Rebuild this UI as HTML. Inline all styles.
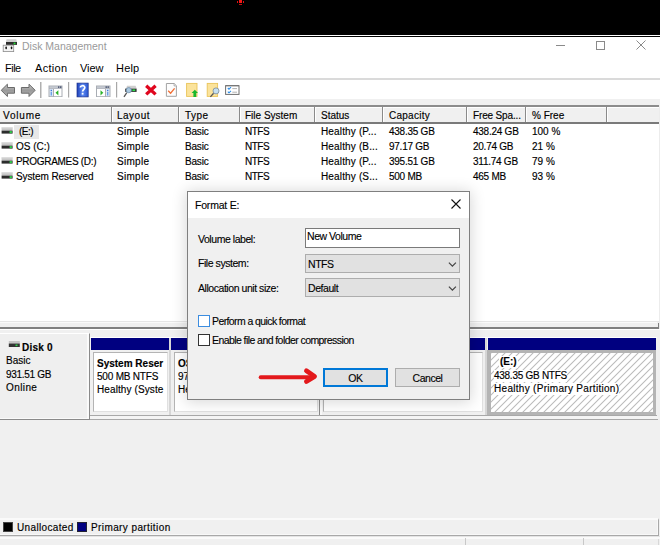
<!DOCTYPE html>
<html><head><meta charset="utf-8">
<style>
*{margin:0;padding:0;box-sizing:border-box}
html,body{width:660px;height:545px;overflow:hidden;background:#f0f0f0;font-family:"Liberation Sans",sans-serif;font-size:10px;color:#000}
.a{position:absolute;white-space:nowrap}
.f{font-size:10px;line-height:12px;-webkit-text-stroke:0.15px currentColor}
.d{font-size:10.5px;letter-spacing:-0.45px;line-height:12px;-webkit-text-stroke:0.12px currentColor}
svg{position:absolute;overflow:visible}
</style></head><body>
<!-- top black bar -->
<div class="a" style="left:0;top:0;width:660px;height:35px;background:#000"></div>
<div class="a" style="left:237px;top:1px;width:1px;height:2px;background:#e01010"></div>
<div class="a" style="left:239px;top:0;width:3px;height:3px;background:#f01818"></div>
<div class="a" style="left:243px;top:1px;width:1px;height:2px;background:#e01010"></div>
<div class="a" style="left:239px;top:4px;width:3px;height:1px;background:#c01010"></div>
<div class="a" style="left:0;top:35px;width:660px;height:1px;background:#fff"></div>
<div class="a" style="left:0;top:36px;width:660px;height:1px;background:#000"></div>

<!-- title bar -->
<div class="a" style="left:0;top:37px;width:660px;height:41px;background:#fff"></div>
<svg style="left:0;top:36px" width="20" height="18" viewBox="0 36 20 18">
  <path d="M6.5 39.2H16.3L16.9 42H6Z" fill="#cfcfcf"/>
  <rect x="6" y="42" width="11" height="2.9" fill="#2e2e2e"/>
  <rect x="13.6" y="42.6" width="1.9" height="1.7" fill="#22dd33"/>
  <rect x="3.2" y="45.2" width="10.5" height="6.4" fill="#f4f4f4" stroke="#8c8c8c" stroke-width="0.8"/>
  <rect x="5.4" y="46.6" width="1.5" height="2.6" rx="0.6" fill="#111"/>
  <rect x="10.8" y="46.6" width="1.5" height="2.6" rx="0.6" fill="#111"/>
</svg>
<div class="a" style="left:22px;top:40px;font-size:10.5px;color:#9a9a9a;line-height:12px">Disk Management</div>
<div class="a" style="left:556px;top:45px;width:9px;height:1px;background:#8a8a8a"></div>
<div class="a" style="left:596px;top:41px;width:9px;height:9px;border:1px solid #8a8a8a"></div>
<svg style="left:636px;top:40px" width="10" height="10" viewBox="0 0 10 10"><path d="M0.5 0.5L9.5 9.5M9.5 0.5L0.5 9.5" stroke="#8a8a8a" stroke-width="1"/></svg>

<!-- menu -->
<div class="a" style="left:5px;top:62.2px;font-size:11px;line-height:12px;letter-spacing:-0.5px">File</div>
<div class="a" style="left:35px;top:62.2px;font-size:11px;line-height:12px;letter-spacing:0.3px">Action</div>
<div class="a" style="left:80px;top:62.2px;font-size:11px;line-height:12px;letter-spacing:-0.1px">View</div>
<div class="a" style="left:116px;top:62.2px;font-size:11px;line-height:12px;letter-spacing:0.2px">Help</div>

<!-- toolbar -->
<div class="a" style="left:0;top:78px;width:660px;height:2px;background:#dadada"></div>
<div class="a" style="left:0;top:80px;width:660px;height:19px;background:#fff"></div>
<div class="a" style="left:0;top:99px;width:660px;height:6px;background:#f0f0f0"></div>


<svg style="left:0;top:80px" width="245" height="19" viewBox="0 80 245 19">
 <defs>
  <linearGradient id="ag" x1="0" y1="0" x2="0" y2="1"><stop offset="0" stop-color="#c8c8c8"/><stop offset="0.5" stop-color="#9a9a9a"/><stop offset="1" stop-color="#b0b0b0"/></linearGradient>
  <linearGradient id="hg" x1="0" y1="0" x2="1" y2="0"><stop offset="0" stop-color="#1c3fb8"/><stop offset="0.5" stop-color="#5d8af2"/><stop offset="1" stop-color="#2a55d0"/></linearGradient>
 </defs>
 <!-- back -->
 <path d="M1.2 90.3L7.4 84.2V87.5H14.5V93.2H7.4V96.5Z" fill="url(#ag)" stroke="#6a6a6a" stroke-width="1" stroke-linejoin="round"/>
 <!-- forward -->
 <path d="M35.2 90.3L29 84.2V87.5H21.4V93.2H29V96.5Z" fill="url(#ag)" stroke="#6a6a6a" stroke-width="1" stroke-linejoin="round"/>
 <rect x="40" y="82" width="1.5" height="16" fill="#b0b0b0"/>
 <!-- console tree hide -->
 <rect x="48.5" y="85.5" width="14" height="11.5" fill="#a9adb4"/>
 <rect x="49.5" y="86.3" width="12" height="2.2" fill="#c4c8d0"/>
 <rect x="58" y="86.3" width="1.4" height="1.6" fill="#4a5470"/><rect x="60" y="86.3" width="1.4" height="1.6" fill="#4a5470"/>
 <rect x="49.5" y="89" width="3.5" height="7.2" fill="#dfe9f6"/>
 <rect x="50.6" y="89.8" width="1.4" height="1.4" fill="#3a7ad8"/><rect x="50.6" y="92" width="1.4" height="3.5" fill="#6aa0e8"/>
 <rect x="54" y="89" width="7.5" height="7.2" fill="#fff"/>
 <path d="M55.5 92.8L58.4 90.2V95.6Z" fill="#29b22a"/>
 <rect x="68" y="82" width="1.2" height="15.5" fill="#a8a8a8"/>
 <!-- help -->
 <rect x="77" y="83.1" width="11.2" height="13.8" fill="url(#hg)" stroke="#1a2f8a" stroke-width="0.7"/>
 <path d="M80.4 87.6C80.4 85.2 84.8 85 84.8 87.6C84.8 89.2 82.6 89.6 82.6 91.6" fill="none" stroke="#fff" stroke-width="1.7"/>
 <rect x="81.7" y="92.8" width="1.8" height="1.8" fill="#fff"/>
 <!-- console tree show -->
 <rect x="96" y="85.5" width="14.5" height="11.5" fill="#a9adb4"/>
 <rect x="97" y="86.3" width="12.5" height="2.2" fill="#c4c8d0"/>
 <rect x="105.5" y="86.3" width="1.4" height="1.6" fill="#4a5470"/><rect x="107.5" y="86.3" width="1.4" height="1.6" fill="#4a5470"/>
 <rect x="97" y="89" width="8" height="7.2" fill="#fff"/>
 <path d="M100.5 90.2L103.3 92.8L100.5 95.6Z" fill="#29b22a"/>
 <rect x="106" y="89" width="3.5" height="7.2" fill="#dfe9f6"/>
 <rect x="107" y="89.8" width="1.4" height="1.4" fill="#3a7ad8"/><rect x="107" y="92" width="1.4" height="3.5" fill="#6aa0e8"/>
 <rect x="116" y="82" width="1.2" height="15.5" fill="#a8a8a8"/>
 <!-- disk magnifier -->
 <path d="M126 88.6L127 85.8H135.6L136.6 88.6Z" fill="#cfcfcf"/>
 <rect x="125.2" y="88.6" width="11.4" height="3.3" fill="#2e2e2e"/>
 <rect x="132.4" y="89.4" width="2.8" height="1.7" fill="#2ee04a"/>
 <path d="M126.8 92.6L124 96.8" stroke="#555" stroke-width="1.3"/>
 <circle cx="128.8" cy="90.2" r="2.6" fill="#a9c8e0" stroke="#6a8aa8" stroke-width="0.7"/>
 <!-- red X -->
 <path d="M146.2 85.7L155.6 94.4M155.6 85.7L146.2 94.4" stroke="#e0061e" stroke-width="3.3"/>
 <!-- doc check -->
 <path d="M166.4 83.5H174.2L176.4 85.7V96.3H166.4Z" fill="#fdfdfd" stroke="#9a9a9a" stroke-width="0.9"/>
 <path d="M174 83.5V86H176.4" fill="#e0e0e0" stroke="#9a9a9a" stroke-width="0.6"/>
 <path d="M168.2 90.8L170.6 93.2L174.6 88.4" fill="none" stroke="#f26d32" stroke-width="1.3"/>
 <!-- folder up -->
 <rect x="186.6" y="83.4" width="10.4" height="13" fill="#fbe39b" stroke="#e9c45a" stroke-width="0.9"/>
 <path d="M191.6 93L194.8 89.7L198 93H196.2V97H193.4V93Z" fill="#18b82e"/>
 <!-- folder magnifier -->
 <rect x="207.2" y="83.4" width="10.4" height="13" fill="#fbe39b" stroke="#e9c45a" stroke-width="0.9"/>
 <path d="M213.6 93.3L210.4 96.9" stroke="#555" stroke-width="1.3"/>
 <circle cx="216" cy="90.9" r="3" fill="#c6e0f0" stroke="#7a8a98" stroke-width="0.8"/>
 <!-- checklist -->
 <rect x="225.6" y="85.7" width="13.4" height="8.7" fill="#fff" stroke="#6e6e6e" stroke-width="1"/>
 <rect x="225.6" y="85.4" width="13.4" height="0.8" fill="#6e6e6e"/>
 <path d="M227.8 88L229 89.2L231 87.2M227.8 91.6L229 92.8L231 90.8" fill="none" stroke="#2f8fe8" stroke-width="1.1"/>
 <path d="M232.3 88.6H237M232.3 92.2H237" stroke="#a8a8a8" stroke-width="0.9"/>
</svg>
<!-- list header -->
<div class="a" style="left:0;top:105px;width:660px;height:2px;background:#8c8c8c"></div>
<div class="a" style="left:0;top:107px;width:660px;height:1px;background:#fff"></div>
<div class="a" style="left:0;top:108px;width:660px;height:14px;background:#f0f0f0"></div>
<div class="a" style="left:0;top:122px;width:660px;height:2px;background:#7a7a7a"></div>

<!-- list body -->
<div class="a" style="left:0;top:124px;width:660px;height:197px;background:#fff"></div>
<div class="a" style="left:111px;top:107px;width:1px;height:15px;background:#8a8a8a"></div><div class="a" style="left:112px;top:107px;width:1px;height:15px;background:#fff"></div>
<div class="a" style="left:178px;top:107px;width:1px;height:15px;background:#8a8a8a"></div><div class="a" style="left:179px;top:107px;width:1px;height:15px;background:#fff"></div>
<div class="a" style="left:239px;top:107px;width:1px;height:15px;background:#8a8a8a"></div><div class="a" style="left:240px;top:107px;width:1px;height:15px;background:#fff"></div>
<div class="a" style="left:314px;top:107px;width:1px;height:15px;background:#8a8a8a"></div><div class="a" style="left:315px;top:107px;width:1px;height:15px;background:#fff"></div>
<div class="a" style="left:382px;top:107px;width:1px;height:15px;background:#8a8a8a"></div><div class="a" style="left:383px;top:107px;width:1px;height:15px;background:#fff"></div>
<div class="a" style="left:466px;top:107px;width:1px;height:15px;background:#8a8a8a"></div><div class="a" style="left:467px;top:107px;width:1px;height:15px;background:#fff"></div>
<div class="a" style="left:525px;top:107px;width:1px;height:15px;background:#8a8a8a"></div><div class="a" style="left:526px;top:107px;width:1px;height:15px;background:#fff"></div>
<div class="a" style="left:606px;top:107px;width:1px;height:15px;background:#8a8a8a"></div><div class="a" style="left:607px;top:107px;width:1px;height:15px;background:#fff"></div>
<div class="a f" style="left:3px;top:110px;letter-spacing:0.8px">Volume</div>
<div class="a f" style="left:117px;top:110px;letter-spacing:0.5px">Layout</div>
<div class="a f" style="left:185px;top:110px;letter-spacing:0.5px">Type</div>
<div class="a f" style="left:245px;top:110px;letter-spacing:0px">File System</div>
<div class="a f" style="left:321px;top:110px;letter-spacing:0px">Status</div>
<div class="a f" style="left:389px;top:110px;letter-spacing:0.25px">Capacity</div>
<div class="a f" style="left:473px;top:110px;letter-spacing:-0.15px">Free Spa...</div>
<div class="a f" style="left:532px;top:110px;letter-spacing:0px">% Free</div>
<div class="a" style="left:14px;top:125px;width:25px;height:14px;background:#e8e8e8"></div>
<svg style="left:1px;top:128px" width="12" height="7" viewBox="0 0 12 7"><rect x="0.6" y="-0.6" width="11" height="3.2" fill="#c6c6c6"/><rect x="0.6" y="-0.6" width="11" height="1" fill="#dedede"/><rect x="0.6" y="2.6" width="11" height="3" fill="#2c2c2c"/><rect x="8.6" y="3.1" width="2.3" height="2" fill="#2fd04a"/></svg>
<div class="a f" style="left:19px;top:126px;letter-spacing:-0.5px">(E:)</div>
<div class="a f" style="left:117px;top:126px;letter-spacing:0.3px">Simple</div>
<div class="a f" style="left:185px;top:126px;letter-spacing:-0.2px">Basic</div>
<div class="a f" style="left:245px;top:126px;letter-spacing:-0.5px">NTFS</div>
<div class="a f" style="left:321px;top:126px;letter-spacing:0.15px">Healthy (P...</div>
<div class="a f" style="left:389px;top:126px;letter-spacing:-0.25px">438.35 GB</div>
<div class="a f" style="left:473px;top:126px;letter-spacing:-0.25px">438.24 GB</div>
<div class="a f" style="left:532px;top:126px;letter-spacing:0px">100 %</div>
<svg style="left:1px;top:143px" width="12" height="7" viewBox="0 0 12 7"><rect x="0.6" y="-0.6" width="11" height="3.2" fill="#c6c6c6"/><rect x="0.6" y="-0.6" width="11" height="1" fill="#dedede"/><rect x="0.6" y="2.6" width="11" height="3" fill="#2c2c2c"/><rect x="8.6" y="3.1" width="2.3" height="2" fill="#2fd04a"/></svg>
<div class="a f" style="left:16px;top:141px;letter-spacing:0px">OS (C:)</div>
<div class="a f" style="left:117px;top:141px;letter-spacing:0.3px">Simple</div>
<div class="a f" style="left:185px;top:141px;letter-spacing:-0.2px">Basic</div>
<div class="a f" style="left:245px;top:141px;letter-spacing:-0.5px">NTFS</div>
<div class="a f" style="left:321px;top:141px;letter-spacing:0.15px">Healthy (B...</div>
<div class="a f" style="left:389px;top:141px;letter-spacing:-0.25px">97.17 GB</div>
<div class="a f" style="left:473px;top:141px;letter-spacing:-0.25px">20.74 GB</div>
<div class="a f" style="left:532px;top:141px;letter-spacing:0px">21 %</div>
<svg style="left:1px;top:158px" width="12" height="7" viewBox="0 0 12 7"><rect x="0.6" y="-0.6" width="11" height="3.2" fill="#c6c6c6"/><rect x="0.6" y="-0.6" width="11" height="1" fill="#dedede"/><rect x="0.6" y="2.6" width="11" height="3" fill="#2c2c2c"/><rect x="8.6" y="3.1" width="2.3" height="2" fill="#2fd04a"/></svg>
<div class="a f" style="left:16px;top:156px;letter-spacing:-0.3px">PROGRAMES (D:)</div>
<div class="a f" style="left:117px;top:156px;letter-spacing:0.3px">Simple</div>
<div class="a f" style="left:185px;top:156px;letter-spacing:-0.2px">Basic</div>
<div class="a f" style="left:245px;top:156px;letter-spacing:-0.5px">NTFS</div>
<div class="a f" style="left:321px;top:156px;letter-spacing:0.15px">Healthy (P...</div>
<div class="a f" style="left:389px;top:156px;letter-spacing:-0.25px">395.51 GB</div>
<div class="a f" style="left:473px;top:156px;letter-spacing:-0.25px">311.74 GB</div>
<div class="a f" style="left:532px;top:156px;letter-spacing:0px">79 %</div>
<svg style="left:1px;top:173px" width="12" height="7" viewBox="0 0 12 7"><rect x="0.6" y="-0.6" width="11" height="3.2" fill="#c6c6c6"/><rect x="0.6" y="-0.6" width="11" height="1" fill="#dedede"/><rect x="0.6" y="2.6" width="11" height="3" fill="#2c2c2c"/><rect x="8.6" y="3.1" width="2.3" height="2" fill="#2fd04a"/></svg>
<div class="a f" style="left:16px;top:171px;letter-spacing:-0.1px">System Reserved</div>
<div class="a f" style="left:117px;top:171px;letter-spacing:0.3px">Simple</div>
<div class="a f" style="left:185px;top:171px;letter-spacing:-0.2px">Basic</div>
<div class="a f" style="left:245px;top:171px;letter-spacing:-0.5px">NTFS</div>
<div class="a f" style="left:321px;top:171px;letter-spacing:0.15px">Healthy (S...</div>
<div class="a f" style="left:389px;top:171px;letter-spacing:-0.25px">500 MB</div>
<div class="a f" style="left:473px;top:171px;letter-spacing:-0.25px">465 MB</div>
<div class="a f" style="left:532px;top:171px;letter-spacing:0px">93 %</div>

<!-- splitter -->
<div class="a" style="left:0;top:321px;width:660px;height:1px;background:#e6e6e6"></div>
<div class="a" style="left:0;top:327px;width:659px;height:2px;background:#808080"></div>
<div class="a" style="left:658px;top:323px;width:1px;height:4px;background:#808080"></div>
<div class="a" style="left:0;top:322px;width:657px;height:1px;background:#fafafa"></div>
<div class="a" style="left:659px;top:105px;width:1px;height:224px;background:#ececec"></div>
<div class="a" style="left:0;top:329px;width:660px;height:1px;background:#fff"></div>
<!-- disk 0 box -->
<div class="a" style="left:0;top:333px;width:90px;height:87px;background:#efefef;border-top:1px solid #fff;border-right:1px solid #8a8a8a;border-bottom:1px solid #8a8a8a"></div>
<div class="a" style="left:87px;top:334px;width:2px;height:84px;background:#fafafa"></div>
<div class="a" style="left:0;top:418px;width:89px;height:1px;background:#fafafa"></div>
<svg style="left:8px;top:341px" width="12" height="7" viewBox="0 0 12 7"><rect x="0.8" y="0" width="11" height="2.5" fill="#c4c4c4"/><rect x="0.8" y="2.5" width="11" height="3.5" fill="#333"/><rect x="7.5" y="3.5" width="2" height="1.6" fill="#2fd04a"/></svg>
<div class="a f" style="left:22px;top:342px;font-weight:bold;letter-spacing:0.2px">Disk 0</div>
<div class="a f" style="left:6px;top:355px">Basic</div>
<div class="a f" style="left:6px;top:369px;letter-spacing:-0.3px">931.51 GB</div>
<div class="a f" style="left:6px;top:382px;letter-spacing:0.4px">Online</div>
<!-- partitions -->
<div class="a" style="left:90px;top:337px;width:567px;height:1px;background:#fff"></div>
<div class="a" style="left:90px;top:415px;width:567px;height:1px;background:#a8a8a8"></div>
<div class="a" style="left:90px;top:419px;width:568px;height:1px;background:#a8a8a8"></div>
<div class="a" style="left:90px;top:416px;width:568px;height:3px;background:#f4f4f4"></div>
<div class="a" style="left:91px;top:338px;width:78px;height:12px;background:#000080"></div>
<div class="a" style="left:171px;top:338px;width:148px;height:12px;background:#000080"></div>
<div class="a" style="left:322px;top:338px;width:163px;height:12px;background:#000080"></div>
<div class="a" style="left:488px;top:338px;width:168px;height:12px;background:#000080"></div>
<div class="a" style="left:169px;top:338px;width:2px;height:77px;background:#d6d6d6"></div>
<div class="a" style="left:319px;top:338px;width:1px;height:77px;background:#8a8a8a"></div>
<div class="a" style="left:320px;top:338px;width:2px;height:77px;background:#fafafa"></div>
<div class="a" style="left:485px;top:338px;width:2px;height:77px;background:#d6d6d6"></div>
<div class="a" style="left:93px;top:352px;width:75px;height:60px;background:#fff;border:1px solid #b4b4b4;border-right-color:#e0e0e0;border-bottom-color:#e0e0e0"></div>
<div class="a" style="left:174px;top:352px;width:144px;height:60px;background:#fff;border:1px solid #b4b4b4;border-right-color:#e0e0e0;border-bottom-color:#e0e0e0"></div>
<div class="a" style="left:323px;top:352px;width:160px;height:60px;background:#fff;border:1px solid #b4b4b4;border-right-color:#e0e0e0;border-bottom-color:#e0e0e0"></div>
<svg style="left:487px;top:350px" width="169" height="65" viewBox="0 0 169 65">
 <defs><pattern id="h" patternUnits="userSpaceOnUse" width="7" height="7"><path d="M-1 8L8 -1" stroke="#bababa" stroke-width="1.05"/><path d="M-1 1L1 -1M6 8L8 6" stroke="#bababa" stroke-width="1.05"/></pattern></defs>
 <rect x="0" y="0" width="169" height="65" fill="#b4b4b4"/>
 <rect x="4" y="3" width="162" height="59" fill="#fff"/>
 <rect x="4" y="3" width="162" height="59" fill="url(#h)"/>
</svg>
<div class="a" style="left:95px;top:353px;width:72px;height:58px;overflow:hidden">
<div class="a f" style="left:2px;top:5px;font-weight:bold;letter-spacing:0px">System Reser</div>
<div class="a f" style="left:2px;top:18px;letter-spacing:-0.2px">500 MB NTFS</div>
<div class="a f" style="left:2px;top:31px;letter-spacing:0.1px">Healthy (Syste</div>
</div>
<div class="a" style="left:175px;top:353px;width:142px;height:58px;overflow:hidden">
<div class="a f" style="left:3px;top:5px;font-weight:bold">OS (C:)</div>
<div class="a f" style="left:3px;top:18px">97.17 GB NTFS</div>
<div class="a f" style="left:3px;top:31px">Healthy (Boot, Page File, Crash Dump, Primary Partition)</div>
</div>
<div class="a f" style="left:499px;top:356px;font-weight:bold;background:#fff;padding:0 1px">(E:)</div>
<div class="a f" style="left:494px;top:370px;background:#fff;letter-spacing:-0.27px">438.35 GB NTFS</div>
<div class="a f" style="left:494px;top:383px;background:#fff;letter-spacing:0.3px">Healthy (Primary Partition)</div>

<!-- dialog -->
<div class="a" style="left:187px;top:191px;width:283px;height:209px;background:#f0f0f0;border:1px solid #7f7f7f;box-shadow:0 1px 14px 1px rgba(0,0,0,0.16)"></div>
<div class="a" style="left:188px;top:192px;width:281px;height:26px;background:#fff"></div>
<div class="a d" style="left:195px;top:199px;letter-spacing:-0.2px">Format E:</div>
<svg style="left:451px;top:199px" width="10" height="10" viewBox="0 0 10 10"><path d="M0.5 0.5L9.5 9.5M9.5 0.5L0.5 9.5" stroke="#111" stroke-width="1.1"/></svg>
<div class="a d" style="left:198px;top:233px">Volume label:</div>
<div class="a" style="left:305px;top:228px;width:155px;height:20px;background:#fff;border:1px solid #7a7a7a"></div>
<div class="a d" style="left:307px;top:230px">New Volume</div>
<div class="a d" style="left:198px;top:257px">File system:</div>
<div class="a" style="left:305px;top:254px;width:155px;height:19px;background:#e1e1e1;border:1px solid #adadad"></div>
<div class="a d" style="left:308px;top:258px">NTFS</div>
<svg style="left:448px;top:262px" width="9" height="5" viewBox="0 0 9 5"><path d="M0.9 0.6L4.4 4.1L7.9 0.6" fill="none" stroke="#444" stroke-width="1.25"/></svg>
<div class="a d" style="left:198px;top:282px">Allocation unit size:</div>
<div class="a" style="left:305px;top:278px;width:155px;height:19px;background:#e1e1e1;border:1px solid #adadad"></div>
<div class="a d" style="left:308px;top:282px">Default</div>
<svg style="left:448px;top:286px" width="9" height="5" viewBox="0 0 9 5"><path d="M0.9 0.6L4.4 4.1L7.9 0.6" fill="none" stroke="#444" stroke-width="1.25"/></svg>
<div class="a" style="left:198px;top:315px;width:12px;height:12px;background:#fff;border:1px solid #3c8de0"></div>
<div class="a d" style="left:212px;top:315px;letter-spacing:-0.6px">Perform a quick format</div>
<div class="a" style="left:198px;top:334px;width:12px;height:12px;background:#fff;border:1px solid #333"></div>
<div class="a d" style="left:212px;top:333.5px;letter-spacing:-0.57px">Enable file and folder compression</div>
<div class="a" style="left:323px;top:368px;width:65px;height:19px;background:#e1e1e1;border:2px solid #0078d7"></div>
<div class="a d" style="left:323px;top:372px;width:65px;text-align:center">OK</div>
<div class="a" style="left:395px;top:368px;width:65px;height:19px;background:#e1e1e1;border:1px solid #adadad"></div>
<div class="a d" style="left:395px;top:372px;width:65px;text-align:center">Cancel</div>
<svg style="left:255px;top:366px" width="66" height="20" viewBox="0 0 66 20">
 <path d="M5.7 11.2H58" stroke="#e3191c" stroke-width="4" stroke-linecap="round"/>
 <path d="M51.4 4.8L59.6 10.4L51.4 15.6" fill="none" stroke="#e3191c" stroke-width="4.7" stroke-linecap="round" stroke-linejoin="round"/>
</svg>
<!-- legend -->
<div class="a" style="left:0;top:518px;width:659px;height:18px;background:#f0f0f0;border-top:2px solid #fafafa;border-right:1px solid #a8a8a8;border-bottom:1px solid #a8a8a8"></div>
<div class="a" style="left:657px;top:520px;width:1px;height:15px;background:#f8f8f8"></div><div class="a" style="left:0;top:534px;width:658px;height:1px;background:#f8f8f8"></div>
<div class="a" style="left:3px;top:522px;width:10px;height:10px;background:#000;border:1px solid #444"></div>
<div class="a f" style="left:17px;top:522px;letter-spacing:0.35px">Unallocated</div>
<div class="a" style="left:77px;top:522px;width:10px;height:10px;background:#000080;border:1px solid #223"></div>
<div class="a f" style="left:91px;top:522px;letter-spacing:0.4px">Primary partition</div>
<!-- status bar -->
<div class="a" style="left:0;top:536px;width:660px;height:1px;background:#e4e4e4"></div><div class="a" style="left:0;top:537px;width:660px;height:2px;background:#fafafa"></div><div class="a" style="left:658px;top:539px;width:1px;height:6px;background:#d8d8d8"></div>
<div class="a" style="left:465px;top:538px;width:1px;height:7px;background:#c8c8c8"></div>
<div class="a" style="left:583px;top:538px;width:1px;height:7px;background:#c8c8c8"></div>
</body></html>
